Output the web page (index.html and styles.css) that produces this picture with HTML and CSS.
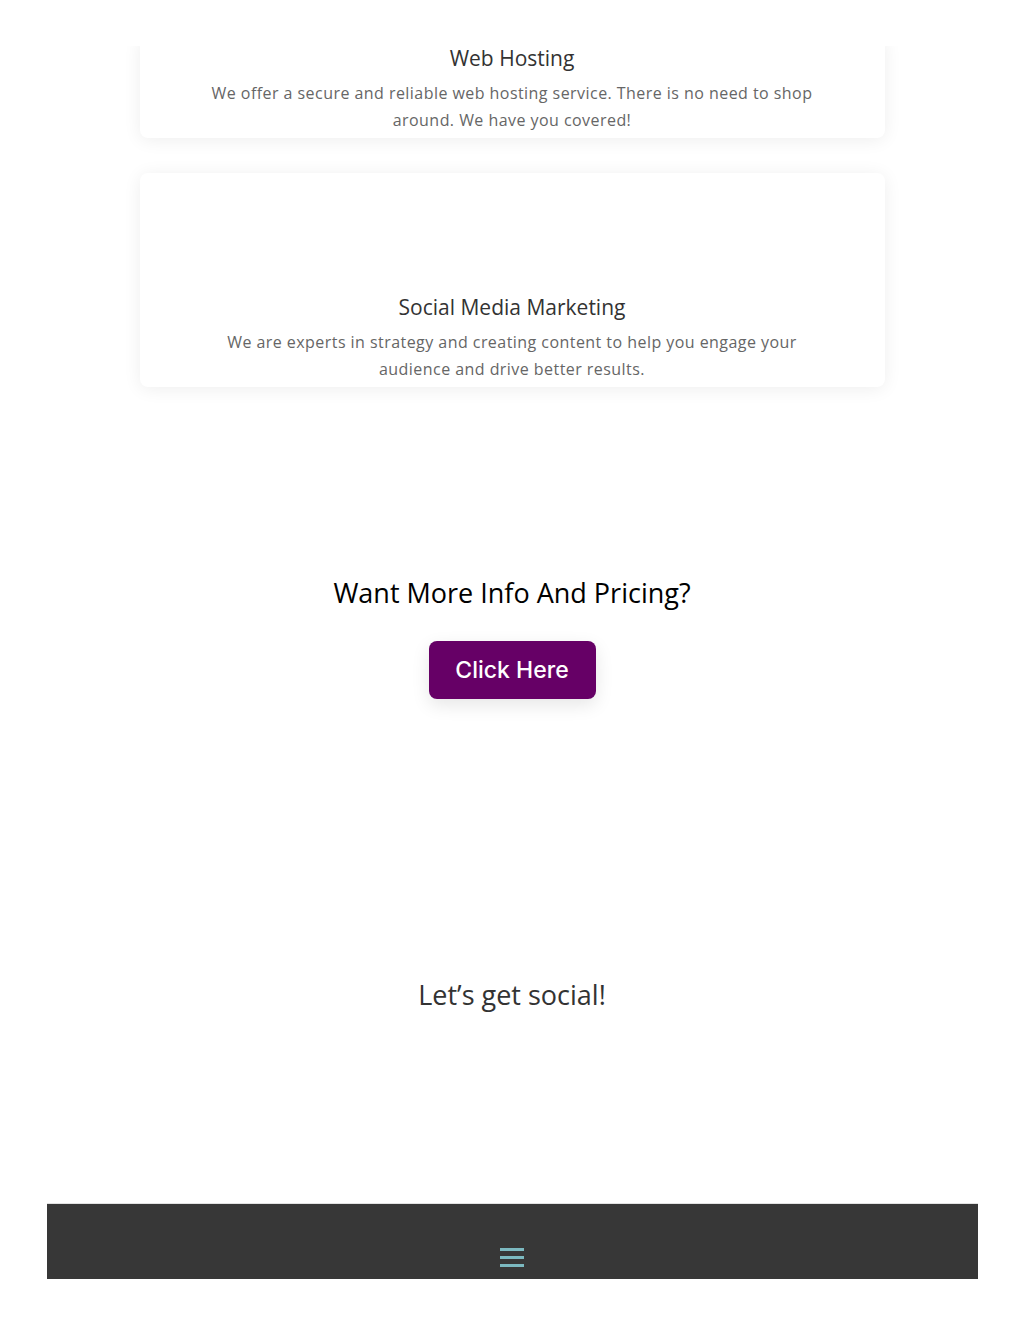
FILE: index.html
```html
<!DOCTYPE html>
<html lang="en">
<head>
  <meta charset="UTF-8">
  <title>Services</title>
  <meta name="viewport" content="width=device-width, initial-scale=1.0">
  <link rel="stylesheet" href="styles.css">
</head>
<body>
  <div class="top-bar"></div>

  <section class="services">
    <div class="service-card first">
      <h4 class="service-title">Web Hosting</h4>
      <p class="service-text">We offer a secure and reliable web hosting service. There is no need to shop around. We have you covered!</p>
    </div>
    <div class="service-card">
      <div class="service-icon"></div>
      <h4 class="service-title">Social Media Marketing</h4>
      <p class="service-text">We are experts in strategy and creating content to help you engage your audience and drive better results.</p>
    </div>
  </section>

  <section class="cta">
    <h2 class="cta-title">Want More Info And Pricing?</h2>
    <a class="cta-button" href="#">Click Here</a>
  </section>

  <section class="social">
    <h2 class="social-title">Let’s get social!</h2>
  </section>

  <footer class="footer">
    <button class="menu-toggle" aria-label="Menu">
      <span></span><span></span><span></span>
    </button>
  </footer>
</body>
</html>
```

FILE: styles.css
```css
* {
  margin: 0;
  padding: 0;
  box-sizing: border-box;
}

body {
  background: #ffffff;
  font-family: 'Open Sans', 'Liberation Sans', sans-serif;
  color: #666666;
  height: 1325px;
  overflow: hidden;
}

/* White strip that hides the top of the first card */
.top-bar {
  height: 46px;
  background: #ffffff;
  position: relative;
  z-index: 2;
}

/* Service cards */
.services {
  width: 745px;
  margin: 0 auto;
  display: flex;
  flex-direction: column;
  gap: 35px;
}

.service-card {
  background: #ffffff;
  border-radius: 8px;
  box-shadow: 0 2px 18px rgba(0, 0, 0, 0.07);
  text-align: center;
  padding: 0 70px 5px;
}

.service-card.first {
  margin-top: -10px;
  padding-top: 7px;
}

.service-icon {
  height: 119px;
}

.service-title {
  font-size: 21px;
  font-weight: 400;
  line-height: 31px;
  color: #333333;
  margin-bottom: 6px;
}

.service-text {
  font-size: 16px;
  line-height: 26.5px;
  letter-spacing: 0.45px;
  color: #666666;
}

/* Call to action */
.cta {
  padding-top: 188px;
  display: flex;
  flex-direction: column;
  align-items: center;
}

.cta-title {
  font-size: 27px;
  font-weight: 400;
  line-height: 36px;
  color: #000000;
}

.cta-button {
  margin-top: 30px;
  width: 167px;
  height: 58px;
  display: flex;
  align-items: center;
  justify-content: center;
  background: #660066;
  color: #ffffff;
  border-radius: 8px;
  font-family: 'Inter', 'Noto Sans', sans-serif;
  font-weight: 500;
  font-size: 23px;
  text-decoration: none;
  box-shadow: 0 6px 18px rgba(0, 0, 0, 0.1);
}

/* Social */
.social {
  padding-top: 278px;
  text-align: center;
}

.social-title {
  font-size: 27px;
  font-weight: 400;
  line-height: 36px;
  color: #333333;
}

/* Footer */
.footer {
  width: 931px;
  margin: 190px auto 0;
  height: 76px;
  background: #373737;
  border-top: 1px solid #e2e2e2;
  display: flex;
  justify-content: center;
  padding-top: 44px;
}

.menu-toggle {
  width: 24px;
  height: 19px;
  background: none;
  border: none;
  display: flex;
  flex-direction: column;
  justify-content: space-between;
  cursor: pointer;
}

.menu-toggle span {
  display: block;
  height: 3px;
  background: #7cb9c0;
}
```
